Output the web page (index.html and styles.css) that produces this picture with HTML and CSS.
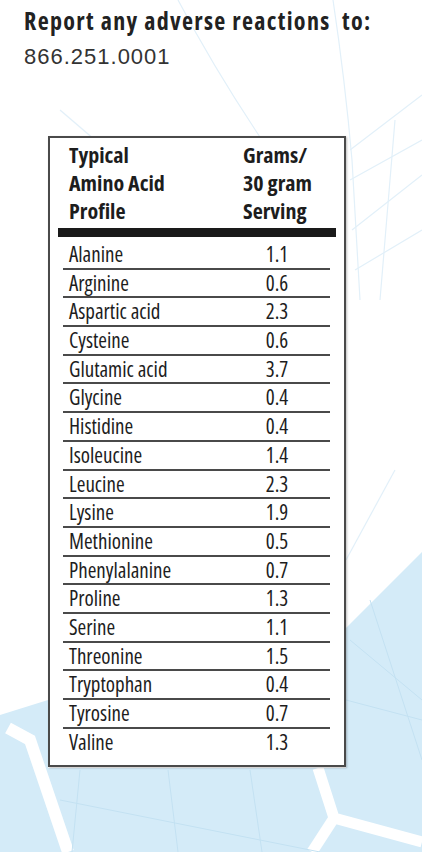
FILE: index.html
```html
<!DOCTYPE html>
<html lang="en">
<head>
  <meta charset="UTF-8">
  <meta name="viewport" content="width=device-width, initial-scale=1.0">
  <title>Amino Acid Profile</title>
  <link rel="stylesheet" href="styles.css">
</head>
<body>
  <!-- Background artwork -->
  <svg class="backdrop" viewBox="0 0 422 852" preserveAspectRatio="none" aria-hidden="true">
    <g fill="none" stroke="#e2f0f9" stroke-width="1.2">
      <path d="M178 0 Q215 70 262 140"/>
      <path d="M333 0 Q345 80 352 160 L360 300"/>
      <path d="M350 150 L422 95"/>
      <path d="M350 180 L422 140"/>
      <path d="M352 230 L422 175"/>
      <path d="M355 270 L422 230"/>
      <path d="M60 110 L95 140"/>
      <path d="M395 120 L380 300"/>
      <path d="M346 560 L395 470"/>
    </g>
    <polygon fill="#d4ebf8" points="346,628 422,552 422,852 346,852"/>
    <polygon fill="#d4ebf8" points="0,715 48,700 48,852 0,852"/>
    <polygon fill="#d4ebf8" points="48,768 346,768 346,852 48,852"/>
    <g fill="none" stroke="#ffffff" stroke-linecap="butt">
      <path d="M8 728 L30 740 L68 852" stroke-width="12"/>
      <path d="M318 768 L334 818 L422 842" stroke-width="11"/>
      <path d="M334 818 L312 852" stroke-width="11"/>
    </g>
    <g fill="none" stroke="#c3e1f2" stroke-width="1">
      <path d="M80 770 L72 852"/>
      <path d="M168 770 L178 852"/>
      <path d="M250 770 L262 852"/>
      <path d="M60 800 L320 852"/>
      <path d="M350 640 L422 700"/>
      <path d="M370 600 L422 760"/>
      <path d="M346 700 L422 720"/>
    </g>
  </svg>

  <header class="notice">
    <h1>Report any adverse reactions&nbsp; to:</h1>
    <p class="phone">866.251.0001</p>
  </header>

  <section class="panel">
    <div class="panel-head">
      <div>Typical<br>Amino Acid<br>Profile</div>
      <div>Grams/<br>30 gram<br>Serving</div>
    </div>
    <div class="bar"></div>
    <ul class="rows">
      <li><span>Alanine</span><span class="val">1.1</span></li>
      <li><span>Arginine</span><span class="val">0.6</span></li>
      <li><span>Aspartic acid</span><span class="val">2.3</span></li>
      <li><span>Cysteine</span><span class="val">0.6</span></li>
      <li><span>Glutamic acid</span><span class="val">3.7</span></li>
      <li><span>Glycine</span><span class="val">0.4</span></li>
      <li><span>Histidine</span><span class="val">0.4</span></li>
      <li><span>Isoleucine</span><span class="val">1.4</span></li>
      <li><span>Leucine</span><span class="val">2.3</span></li>
      <li><span>Lysine</span><span class="val">1.9</span></li>
      <li><span>Methionine</span><span class="val">0.5</span></li>
      <li><span>Phenylalanine</span><span class="val">0.7</span></li>
      <li><span>Proline</span><span class="val">1.3</span></li>
      <li><span>Serine</span><span class="val">1.1</span></li>
      <li><span>Threonine</span><span class="val">1.5</span></li>
      <li><span>Tryptophan</span><span class="val">0.4</span></li>
      <li><span>Tyrosine</span><span class="val">0.7</span></li>
      <li><span>Valine</span><span class="val">1.3</span></li>
    </ul>
  </section>
</body>
</html>
```

FILE: styles.css
```css
/* Global */
body {
  margin: 0;
  padding: 0;
  min-height: 852px;
  position: relative;
  background-color: #fff;
  color: #1d1d1d;
  font-family: 'Open Sans', sans-serif;
  font-stretch: 75%;
}

.backdrop {
  position: absolute;
  top: 0;
  left: 0;
  width: 422px;
  height: 852px;
  z-index: -1;
}

/* Notice */
.notice {
  padding: 8px 0 0 24px;
}

.notice h1 {
  margin: 0;
  font-size: 24px;
  line-height: 26px;
  font-weight: bold;
  font-stretch: 87.5%;
  letter-spacing: 1.35px;
  color: #222;
}

.phone {
  margin: 11px 0 0;
  font-family: 'Liberation Sans', sans-serif;
  font-size: 22px;
  line-height: 24px;
  letter-spacing: 1px;
  color: #333;
}

/* Panel */
.panel {
  width: 298px;
  box-sizing: border-box;
  margin: 67px 0 0 48px;
  padding: 1.5px 8px 10px;
  background: #fff;
  border: 2px solid #4a4a4a;
  box-shadow: 1px 1px 2px rgba(0, 0, 0, 0.25);
}

.panel-head {
  display: grid;
  grid-template-columns: 174px 80px;
  padding-left: 11px;
  font-size: 22px;
  line-height: 28px;
  font-weight: bold;
}

.bar {
  height: 9px;
  margin-top: 4.5px;
  background: #1a1a1a;
}

.rows {
  list-style: none;
  margin: 4px 6px 0 5px;
  padding: 0;
}

.rows li {
  display: grid;
  grid-template-columns: 174px 68px;
  padding: 0 0 0.7px 6px;
  font-size: 21px;
  line-height: 26px;
  border-bottom: 2px solid #4a4a4a;
}

.rows li:last-child {
  border-bottom: none;
}

.val {
  text-align: center;
}
```
